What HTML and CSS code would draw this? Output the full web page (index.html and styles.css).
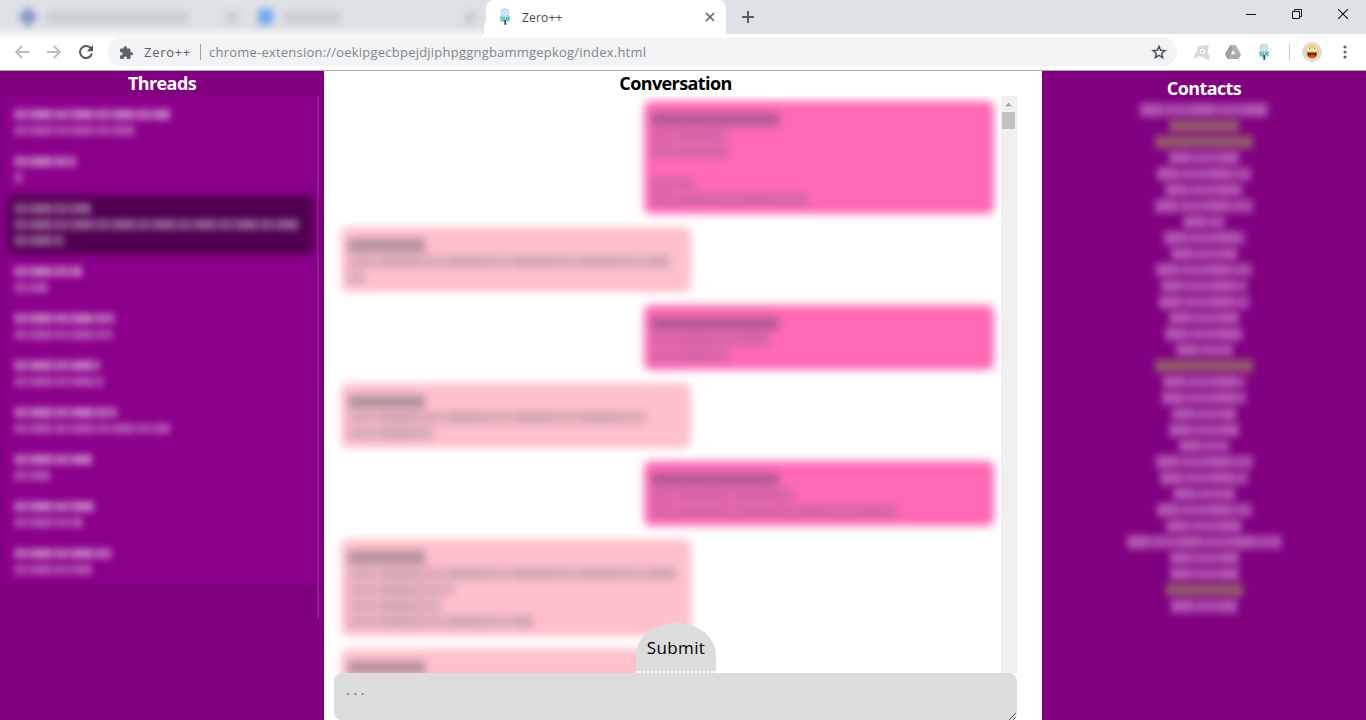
FILE: index.html
```html
<!DOCTYPE html>
<html lang="en">
<head>
<meta charset="utf-8">
<title>Zero++</title>
<link rel="stylesheet" href="styles.css">
</head>
<body>
<svg class="defs" width="0" height="0">
  <symbol id="catcher" viewBox="0 0 12 18">
    <path d="M2.700 8.500v5M9.300 8.500v5" stroke="#42e052" stroke-width="2.200"/>
    <path d="M1.800 8v3M10.300 8v3" stroke="#78cfd0" stroke-width="1"/>
    <path d="M5 9v5M7.500 9v3" stroke="#3e9be0" stroke-width="1.400"/>
    <path d="M6.300 12v4.800" stroke="#2b35b8" stroke-width="1.800"/>
    <circle cx="6" cy="4.800" r="3.600" fill="#e3f3fc" stroke="#aacfe8" stroke-width="1.300"/>
    <path d="M3.500 3.500l5 3M8.500 3.500l-5 3M6 1.500v7" stroke="#b9d8ec" stroke-width=".7"/>
  </symbol>
</svg>
<header class="browser">
  <div class="tabstrip">
    <div class="hidden-tabs">
      <div class="haze">
        <svg class="fav" width="20" height="20" viewBox="0 0 20 20"><path d="M10 1v18M1 10h18" stroke="#6d81bb" stroke-width="5"/><circle cx="10" cy="10" r="7" fill="#8795c4" opacity=".6"/></svg>
        <span class="smear wide"></span><span class="smear dot"></span>
        <span class="fav blue"></span><span class="smear mid"></span><span class="smear dot far"></span>
      </div>
    </div>
    <div class="tab">
      <svg class="tab-icon" width="12" height="18"><use href="#catcher"/></svg>
      <span class="tab-title">Zero++</span>
      <svg class="tab-close" width="10" height="10" viewBox="0 0 10 10"><path d="M1 1l8 8M9 1L1 9" stroke="#5f6368" stroke-width="1.7"/></svg>
    </div>
    <svg class="plus" width="12" height="12" viewBox="0 0 12 12"><path d="M6 0v12M0 6h12" stroke="#55595e" stroke-width="1.9"/></svg>
    <div class="window-controls">
      <svg width="10" height="10" viewBox="0 0 10 10"><path d="M0 5.500h10" stroke="#111"/></svg>
      <svg width="10" height="10" viewBox="0 0 10 10"><path d="M.5 2.500h7v7h-7zM2.500 2.500v-2h7v7h-2" fill="none" stroke="#111"/></svg>
      <svg width="10" height="10" viewBox="0 0 10 10"><path d="M0 0l10 10M10 0L0 10" stroke="#111" stroke-width="1.1"/></svg>
    </div>
  </div>
  <div class="toolbar">
    <svg class="nav back" width="14" height="14" viewBox="0 0 14 14"><path d="M14 7H1.500M7.300 .8L1.200 7l6.100 6.200" fill="none" stroke="#babcbe" stroke-width="1.900"/></svg>
    <svg class="nav forward" width="14" height="14" viewBox="0 0 14 14"><path d="M0 7h12.500M6.700 .8L12.800 7l-6.100 6.200" fill="none" stroke="#babcbe" stroke-width="1.900"/></svg>
    <svg class="nav reload" width="14" height="14" viewBox="0 0 14 14"><path d="M12 3.600A6 6 0 1 0 12.900 8.500" fill="none" stroke="#55595e" stroke-width="2"/><path d="M14 0v6.200H7.800z" fill="#55595e"/></svg>
    <div class="omnibox">
      <svg class="puzzle" width="13" height="13" viewBox="2 1 21 21"><path fill="#5f6368" d="M20.500 11H19V7a2 2 0 0 0-2-2h-4V3.500a2.500 2.500 0 0 0-5 0V5H4a2 2 0 0 0-2 2v3.800h1.500a2.700 2.700 0 0 1 0 5.400H2V20a2 2 0 0 0 2 2h3.800v-1.500a2.700 2.700 0 0 1 5.400 0V22H17a2 2 0 0 0 2-2v-4h1.500a2.500 2.500 0 0 0 0-5z"/></svg>
      <span class="ext-name">Zero++</span><span class="bar"></span>
      <span class="url">chrome-extension://oekipgecbpejdjiphpggngbammgepkog/index.html</span>
      <svg class="star" width="16" height="16" viewBox="0 0 24 24"><path d="M12 3.500l2.500 6 6.500.5-5 4.200 1.600 6.300L12 17.100l-5.600 3.400L8 14.200 3 10l6.500-.5z" fill="none" stroke="#4c5054" stroke-width="2.200"/></svg>
    </div>
    <svg class="ext avast" width="18" height="18" viewBox="0 0 18 18"><path d="M6.500 4.500L14 3.500M6 5L5.500 9 2.500 13.500M6 11.500l5 1 3.500 2.500M14 3.500L13 9l2 6" fill="none" stroke="#d8d8d8" stroke-width="3.200" stroke-linecap="round" stroke-linejoin="round"/><circle cx="9.500" cy="8.500" r="4.500" fill="#d8d8d8"/><circle cx="9.500" cy="8.500" r="2.600" fill="#fff"/><circle cx="9.500" cy="8.500" r="1.300" fill="#cfcfcf"/></svg>
    <svg class="ext drive" width="16" height="14" viewBox="0 0 16 14"><path d="M5.300 0h5.400L16 9.300 13.300 14H2.700L0 9.300z" fill="#b3b3b3"/><path d="M5.300 0L8 4.700 2.700 14 0 9.300z" fill="#9d9d9d"/><path d="M5.300 9.300H16L13.300 14H2.700z" fill="#aaa"/><path d="M8 5.300l2.200 3.900H5.800z" fill="#fff"/></svg>
    <svg class="ext dream" width="12" height="18"><use href="#catcher"/></svg>
    <span class="divider"></span>
    <svg class="profile" width="20" height="20" viewBox="0 0 20 20"><circle cx="10" cy="10" r="10" fill="#dcdcdc"/><circle cx="10" cy="10" r="6.800" fill="#f6cf55"/><ellipse cx="7.400" cy="7.600" rx="2.200" ry="2" fill="#fff8dc"/><ellipse cx="12.600" cy="7.600" rx="2.200" ry="2" fill="#fff8dc"/><path d="M7 7h1.200M12 7h1.200" stroke="#453410" stroke-width="1.200"/><path d="M5 10.500h10Q14.500 16 10 16T5 10.500z" fill="#7d2018"/><path d="M7 14q3-2 6 0-3 3-6 0z" fill="#f05048"/></svg>
    <svg class="menu" width="4" height="14" viewBox="0 0 4 14"><g fill="#5f6368"><circle cx="2" cy="2" r="1.600"/><circle cx="2" cy="7" r="1.600"/><circle cx="2" cy="12" r="1.600"/></g></svg>
  </div>
</header>
<main class="app">
  <section class="threads">
    <h2>Threads</h2>
    <div class="thread-pane">
      <div class="thread-list">
        <div class="thread"><i class="name" style="width:156px"></i><i style="width:122px"></i></div>
        <div class="thread"><i class="name" style="width:62px"></i><i style="width:9px"></i></div>
        <div class="thread selected"><i class="name" style="width:77px"></i><i style="width:286px"></i><i style="width:50px"></i></div>
        <div class="thread"><i class="name" style="width:68px"></i><i style="width:34px"></i></div>
        <div class="thread"><i class="name" style="width:101px"></i><i style="width:100px"></i></div>
        <div class="thread"><i class="name" style="width:86px"></i><i style="width:90px"></i></div>
        <div class="thread"><i class="name" style="width:103px"></i><i style="width:156px"></i></div>
        <div class="thread"><i class="name" style="width:78px"></i><i style="width:36px"></i></div>
        <div class="thread"><i class="name" style="width:81px"></i><i style="width:69px"></i></div>
        <div class="thread"><i class="name" style="width:98px"></i><i style="width:78px"></i></div>
      </div>
    </div>
  </section>
  <section class="conversation">
    <h2>Conversation</h2>
    <div class="chat">
      <div class="messages">
        <div class="msg own"><i class="name" style="width:128px"></i><i style="width:76px"></i><i style="width:78px"></i><i style="width:0"></i><i style="width:42px"></i><i style="width:157px"></i></div>
        <div class="msg"><i class="name" style="width:77px"></i><i style="width:322px"></i><i style="width:16px"></i></div>
        <div class="msg own"><i class="name" style="width:128px"></i><i style="width:118px"></i><i style="width:78px"></i></div>
        <div class="msg"><i class="name" style="width:77px"></i><i style="width:300px"></i><i style="width:85px"></i></div>
        <div class="msg own"><i class="name" style="width:128px"></i><i style="width:144px"></i><i style="width:246px"></i></div>
        <div class="msg"><i class="name" style="width:77px"></i><i style="width:328px"></i><i style="width:106px"></i><i style="width:94px"></i><i style="width:186px"></i></div>
        <div class="msg"><i class="name" style="width:77px"></i><i style="width:0"></i></div>
      </div>
      <div class="scrollbar"><svg width="13" height="17" viewBox="0 0 13 17"><path d="M3 11l3.500-4 3.500 4z" fill="#a3a3a3"/></svg><div class="thumb"></div></div>
    </div>
    <div class="composer">
      <button class="submit">Submit</button>
      <span class="placeholder">...</span>
      <svg class="grip" width="7" height="7" viewBox="0 0 7 7"><path d="M0 7l7-7M4 7l3-3" stroke="#555"/></svg>
    </div>
  </section>
  <section class="contacts">
    <h2>Contacts</h2>
    <div class="contact-list">
      <i style="width:128px"></i><i class="online" style="width:70px"></i><i class="online" style="width:98px"></i><i style="width:70px"></i>
      <i style="width:94px"></i><i style="width:78px"></i><i style="width:98px"></i><i style="width:42px"></i>
      <i style="width:81px"></i><i style="width:66px"></i><i style="width:96px"></i><i style="width:86px"></i>
      <i style="width:90px"></i><i style="width:70px"></i><i style="width:78px"></i><i style="width:57px"></i>
      <i class="online" style="width:98px"></i><i style="width:82px"></i><i style="width:84px"></i><i style="width:64px"></i>
      <i style="width:70px"></i><i style="width:50px"></i><i style="width:97px"></i><i style="width:88px"></i>
      <i style="width:62px"></i><i style="width:95px"></i><i style="width:76px"></i><i style="width:155px"></i>
      <i style="width:69px"></i><i style="width:69px"></i><i class="online" style="width:77px"></i><i style="width:66px"></i>
    </div>
  </section>
</main>
</body>
</html>
```
FILE: styles.css
```css
* { box-sizing: border-box; }
body { margin: 0; width: 1366px; height: 720px; overflow: hidden; background: #fff; font-family: "Open Sans", "Noto Sans", sans-serif; }
svg { display: block; flex: none; }
.defs { position: absolute; }

/* Browser frame */
.browser { height: 71px; border-bottom: 1px solid #a9a9ab; background: #fff; }
.tabstrip { display: flex; height: 38px; background: linear-gradient(#dee1e6 34px, #fff 34px); }
.hidden-tabs { width: 482px; overflow: hidden; background: linear-gradient(#dee1e6 26px, #fafafb 38px); }
.haze { display: flex; align-items: center; height: 34px; padding-left: 18px; filter: blur(3.5px); }
.fav { width: 20px; height: 20px; }
.fav.blue { width: 15px; height: 16px; margin-left: 20px; background: #74a9ef; border-radius: 3px; }
.smear { height: 13px; background: #cbcdd1; }
.smear.wide { width: 142px; margin-left: 8px; }
.smear.dot { width: 12px; margin-left: 38px; }
.smear.mid { width: 56px; margin-left: 11px; }
.smear.far { margin-left: 124px; }
.tab { display: flex; align-items: center; width: 240px; height: 38px; margin-left: 4px; padding: 0 11px 4px 13px; background: #fff; border-radius: 8px 8px 0 0; box-shadow: -4px 18px 0 -2px #fff; }
.tab-title { margin-left: 11px; font-size: 12px; color: #45494d; letter-spacing: .2px; }
.tab-close { margin-left: auto; }
.plus { margin: 11px 0 0 16px; }
.window-controls { display: flex; gap: 36px; margin: 9px 18px 0 auto; }
.toolbar { display: flex; align-items: center; height: 28px; padding-left: 15px; }
.forward { margin-left: 18px; }
.reload { margin-left: 18px; }
.omnibox { display: flex; align-items: center; width: 1069px; height: 28px; margin-left: 15px; padding: 0 10px 0 12px; background: #f1f3f4; border-radius: 14px; font-size: 13px; color: #5f6368; }
.ext-name { width: 48px; margin-left: 11px; letter-spacing: .7px; white-space: nowrap; }
.bar { width: 1px; height: 16px; margin: 0 8px; background: #a0a2a5; }
.url { color: #80868b; letter-spacing: .22px; }
.star { margin-left: auto; }
.avast { margin-left: 16px; }
.drive { margin-left: 14px; }
.dream { margin-left: 17px; }
.divider { width: 1px; height: 16px; margin-left: 19px; background: #c8cacc; }
.profile { margin-left: 12px; }
.menu { margin-left: 21px; }

/* Application columns */
.app { display: grid; grid-template-columns: 324px 718px 324px; height: 649px; }
.app h2 { margin: 0; height: 25px; font-size: 18px; line-height: 25px; text-align: center; letter-spacing: -.6px; }
.app i { display: block; height: 11px; margin-bottom: 5px; }
.threads, .contacts { background: #800080; color: #fff; min-width: 0; }
.thread-pane { width: 319px; height: 522px; border-right: 2px solid #90208f; }
.thread-list { height: 488px; padding: 5px 0 0 8px; background: #8b008b; box-shadow: inset 8px -2px 7px -4px #800080; }
.thread { width: 306px; height: 43px; margin-bottom: 4px; padding: 8px 0 0 6px; }
.thread i { background: repeating-linear-gradient(90deg, #fff6 0 11px, #fff5 11px 19px, #fff7 19px 37px, #fff4 37px 41px); opacity: .65; filter: blur(3px); }
.thread i.name { opacity: .95; }
.thread.selected { position: relative; height: 59px; }
.thread.selected::before { content: ""; position: absolute; inset: 0; background: #500050; filter: blur(4px); }
.thread.selected i { position: relative; opacity: .75; }

.conversation { display: flex; flex-direction: column; padding: 0 25px 0 10px; min-width: 0; }
.chat { display: flex; height: 577px; overflow: hidden; }
.messages { flex: 1; display: flex; flex-direction: column; gap: 13px; padding: 5px 7px 0 7px; }
.msg { flex: none; width: 350px; padding: 12px 7px 5px; background: #ffc0cb; border-radius: 7px; filter: blur(4px); }
.msg.own { align-self: flex-end; background: #ff69b4; }
.msg i { height: 13px; margin-bottom: 3px; background: repeating-linear-gradient(90deg, #40546034 0 27px, #40546022 27px 32px, #4054603c 32px 67px); }
.msg i.name { background: #30405060; }
.msg.own i { background: repeating-linear-gradient(90deg, #38587536 0 23px, #3858752a 23px 28px, #3858753c 28px 59px); }
.msg.own i.name { background: #30406060; }
.scrollbar { width: 16px; background: #f0f0f0; padding-left: 1px; }
.scrollbar svg { height: 16px; }
.thumb { width: 13px; height: 17px; background: #c1c1c1; }
.composer { position: relative; flex: 1; width: 683px; background: #dcdcdc; border-radius: 8px; }
.submit { position: absolute; left: 302px; top: -50px; width: 80px; height: 50px; padding: 0; border: 0; border-bottom: 2px dotted #fff; border-radius: 40px 40px 0 0 / 32px 32px 0 0; background: #dcdcdc; color: #000; font: 17px "Open Sans", sans-serif; letter-spacing: .4px; }
.placeholder { display: block; padding: 4px 12px; font-size: 16px; line-height: 24px; color: #757575; letter-spacing: 3px; }
.grip { position: absolute; right: 1px; bottom: 0; }

.contacts h2 { height: 32px; padding-top: 5px; }
.contact-list { display: flex; flex-direction: column; align-items: center; }
.contact-list i { height: 14px; margin-bottom: 2px; background: repeating-linear-gradient(90deg, #b055b0 0 21px, #a23ca2 21px 26px, #aa48aa 26px 53px); filter: blur(3.5px); }
.contact-list i.online { background: #92566d; }
```
